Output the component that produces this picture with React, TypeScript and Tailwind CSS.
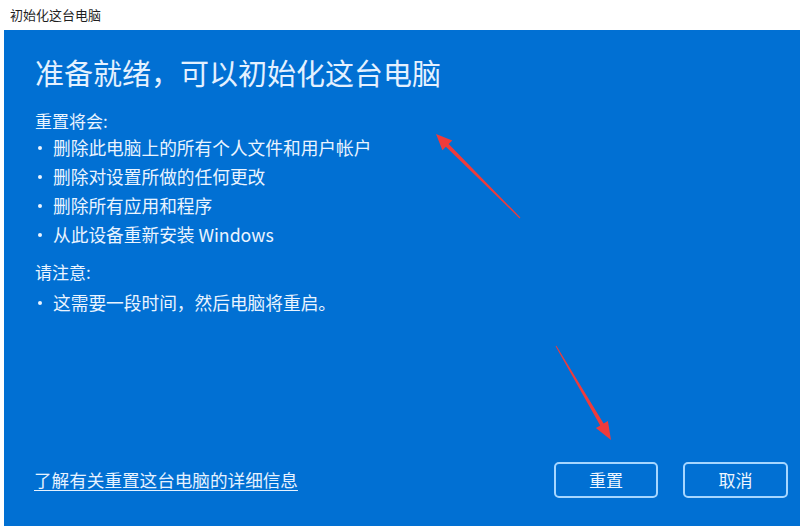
const willRemove = [
  '删除此电脑上的所有个人文件和用户帐户',
  '删除对设置所做的任何更改',
  '删除所有应用和程序',
  '从此设备重新安装 Windows',
];

function Bullet({ children }: { children: React.ReactNode }) {
  return (
    <li className="flex items-center h-[29px]">
      <span className="ml-[3px] mr-[11px] w-[4px] h-[4px] rounded-full bg-[#eaf4ff]" />
      <span>{children}</span>
    </li>
  );
}

function Arrows() {
  return (
    <svg
      className="absolute inset-0 pointer-events-none"
      width="800"
      height="526"
      viewBox="0 0 800 526"
    >
      <polygon
        fill="#ef3b3b"
        points="520.4,217.6 448.7,143.9 452.3,140.4 436,134 442.4,150.3 445.9,146.7 519.6,218.4"
      />
      <polygon
        fill="#ef3b3b"
        points="556.4,345.7 603.6,423.5 607.9,421 611,440 595.9,428 600.2,425.5 555.6,346.3"
      />
    </svg>
  );
}

export default function App() {
  return (
    <div
      className="relative w-[800px] h-[526px] bg-white overflow-hidden flex flex-col"
      style={{ fontFamily: '"Noto Sans CJK SC", "Noto Sans", sans-serif' }}
    >
      {/* title bar */}
      <div className="h-[30px] flex items-center pl-[10px] text-[13px] text-[#1f1f1f]">
        初始化这台电脑
      </div>

      {/* blue panel */}
      <div className="flex-1 ml-[4px] bg-[#0170d3] text-[#eaf4ff] flex flex-col pl-[31px] pr-[12px] pb-[28px]">
        <h1 className="mt-[21px] text-[29px] leading-[42px] text-[#e4f1ff]">
          准备就绪，可以初始化这台电脑
        </h1>

        <p className="mt-[13px] text-[17px] leading-[29px]">重置将会:</p>
        <ul className="-mt-[2px] text-[17.7px] leading-[29px]">
          {willRemove.map((t) => (
            <Bullet key={t}>{t}</Bullet>
          ))}
        </ul>

        <p className="mt-[8px] text-[17px] leading-[29px]">请注意:</p>
        <ul className="mt-[2px] text-[17.7px] leading-[29px]">
          <Bullet>这需要一段时间，然后电脑将重启。</Bullet>
        </ul>

        <div className="flex-1" />

        <div className="flex items-center">
          <a className="-ml-[1px] text-[17.6px] underline underline-offset-[3px] text-[#e6f2ff] cursor-pointer">
            了解有关重置这台电脑的详细信息
          </a>
          <div className="flex-1" />
          <button className="w-[104px] h-[36px] rounded-[5px] border-2 border-[#a6d6ff] text-[17px] text-[#eef6ff]">
            重置
          </button>
          <button className="ml-[25px] w-[105px] h-[36px] rounded-[5px] border-2 border-[#a6d6ff] text-[17px] text-[#eef6ff]">
            取消
          </button>
        </div>
      </div>

      <Arrows />
    </div>
  );
}
